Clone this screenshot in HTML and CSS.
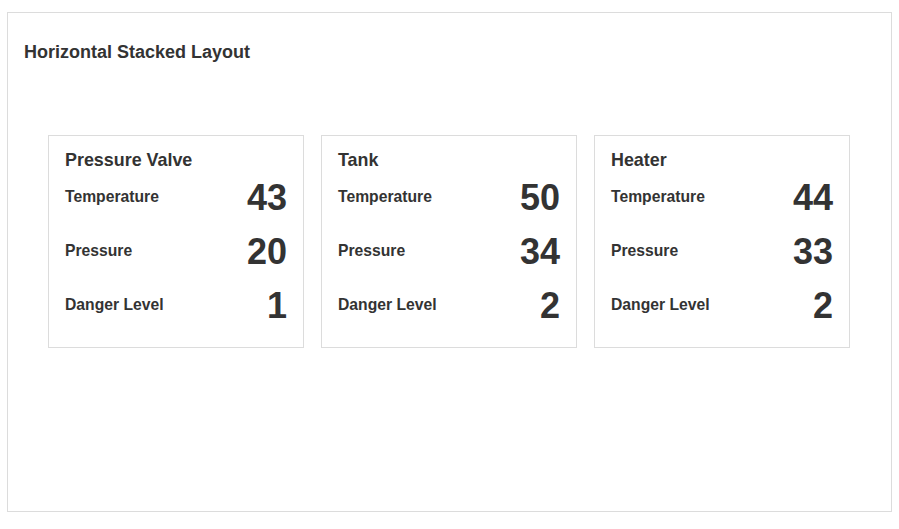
FILE: index.html
```html
<!DOCTYPE html>
<html>
<head>
<meta charset="utf-8">
<link rel="stylesheet" href="styles.css">
</head>
<body>
<div class="panel">
  <h1 class="panel-title">Horizontal Stacked Layout</h1>
  <div class="cards">
    <div class="card">
      <div class="card-title">Pressure Valve</div>
      <div class="row"><span class="label">Temperature</span><span class="value">43</span></div>
      <div class="row"><span class="label">Pressure</span><span class="value">20</span></div>
      <div class="row"><span class="label">Danger Level</span><span class="value">1</span></div>
    </div>
    <div class="card">
      <div class="card-title">Tank</div>
      <div class="row"><span class="label">Temperature</span><span class="value">50</span></div>
      <div class="row"><span class="label">Pressure</span><span class="value">34</span></div>
      <div class="row"><span class="label">Danger Level</span><span class="value">2</span></div>
    </div>
    <div class="card">
      <div class="card-title">Heater</div>
      <div class="row"><span class="label">Temperature</span><span class="value">44</span></div>
      <div class="row"><span class="label">Pressure</span><span class="value">33</span></div>
      <div class="row"><span class="label">Danger Level</span><span class="value">2</span></div>
    </div>
  </div>
</div>
</body>
</html>
```
FILE: styles.css
```css
html, body {
  margin: 0;
  padding: 0;
  background: #fff;
}
body {
  font-family: "Liberation Sans", Arial, sans-serif;
  color: #333;
}
.panel {
  box-sizing: border-box;
  width: 885px;
  height: 500px;
  margin: 12px 0 0 7px;
  border: 1px solid #dcdcdc;
  padding: 29px 16px 0 16px;
}
.panel-title {
  margin: 0;
  font-size: 18px;
  line-height: 21px;
  font-weight: bold;
}
.cards {
  display: flex;
  gap: 17px;
  margin-top: 72px;
  padding-left: 24px;
}
.card {
  box-sizing: border-box;
  width: 256px;
  border: 1px solid #dcdcdc;
  padding: 15px 16px 15px 16px;
}
.card-title {
  font-size: 17.9px;
  line-height: 19px;
  font-weight: bold;
}
.row {
  display: flex;
  align-items: center;
  justify-content: space-between;
  height: 54px;
}
.label {
  font-size: 15.7px;
  font-weight: bold;
}
.value {
  font-size: 36px;
  font-weight: bold;
  line-height: 41px;
}
```
